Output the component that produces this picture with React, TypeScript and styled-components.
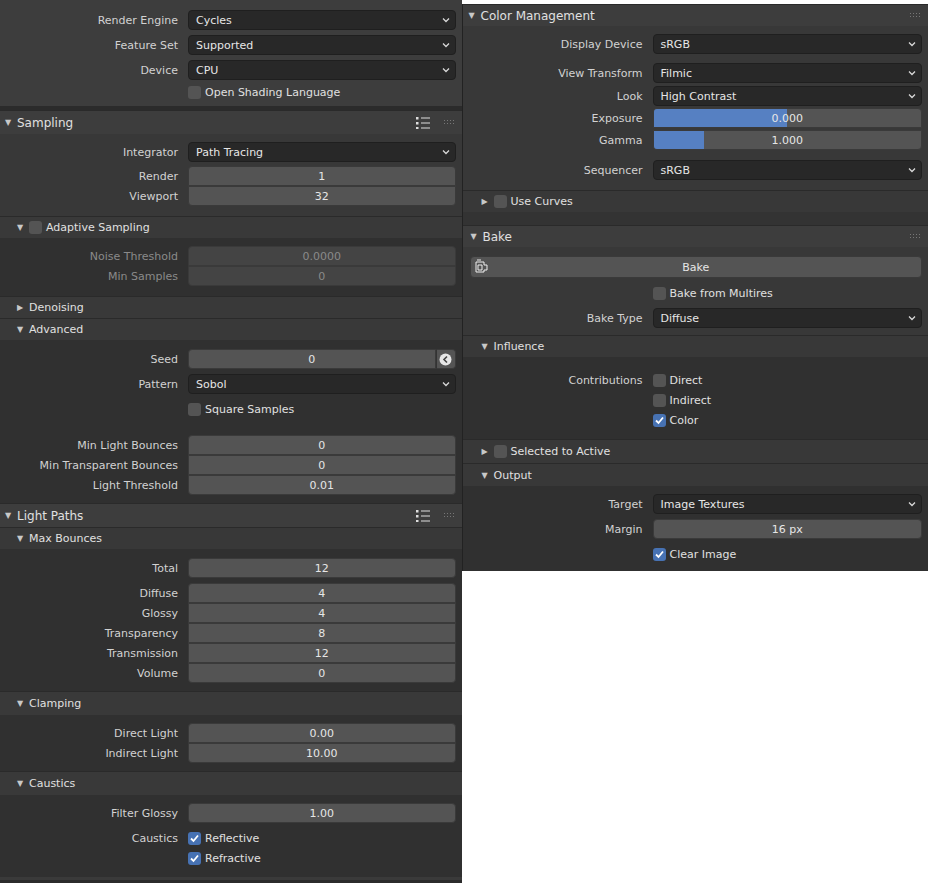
import React from "react";
import styled, { createGlobalStyle } from "styled-components";

const G = createGlobalStyle`
  body { margin: 0; background: #fff; font-family: "DejaVu Sans", sans-serif; font-size: 11px; }
`;

const Page = styled.div`display: flex; align-items: flex-start; width: 928px;`;
const Column = styled.div<{ w: number; mt?: number }>`
  width: ${p => p.w}px; margin-top: ${p => p.mt || 0}px; display: flex; flex-direction: column;
  background: #2b2b2b;
`;
const Section = styled.div<{ bg: string; pt?: number; pb?: number; h?: number }>`
  background: ${p => p.bg}; padding: ${p => p.pt || 0}px 0 ${p => p.pb || 0}px 0;
  display: flex; flex-direction: column; ${p => (p.h ? `height:${p.h}px;box-sizing:border-box;` : "")}
`;
const Header = styled.div<{ h: number; indent: number; bg: string; mt?: number }>`
  height: ${p => p.h}px; background: ${p => p.bg}; margin-top: ${p => p.mt || 0}px;
  display: flex; align-items: center; padding-left: ${p => p.indent}px; color: #e0e0e0;
  font-size: ${p => (p.indent < 10 ? 12 : 11)}px; border-top: 1px solid #2a2a2a; box-sizing: border-box;
`;
const Tri = styled.span`width: 10px; font-size: 8px; color: #c8c8c8; margin-right: 2px;`;
const HeadIcons = styled.div`margin-left: auto; display: flex; align-items: center; gap: 14px; padding-right: 6px;`;
const Row = styled.div<{ lw: number; mt?: number }>`
  display: grid; grid-template-columns: ${p => p.lw}px 1fr; column-gap: 10px; height: 20px;
  margin-top: ${p => p.mt || 0}px; padding-right: 6px; align-items: center;
`;
const Label = styled.div<{ dim?: boolean }>`
  text-align: right; color: ${p => (p.dim ? "#8a8a8a" : "#d2d2d2")}; white-space: nowrap;
`;
const Drop = styled.div`
  height: 20px; background: #282828; border: 1px solid #1f1f1f; border-radius: 4px; box-sizing: border-box;
  display: flex; align-items: center; padding: 0 5px 0 7px; color: #e6e6e6;
`;
const Num = styled.div<{ pos?: "top" | "mid" | "bot" | "one"; dim?: boolean }>`
  position: relative; height: 20px; box-sizing: border-box; background: #545454;
  border: 1px solid #3a3a3a; color: ${p => (p.dim ? "#8a8a8a" : "#e6e6e6")};
  ${p => p.dim && "background:#444;"}
  border-radius: ${p => ({ top: "4px 4px 0 0", mid: "0", bot: "0 0 4px 4px", one: "4px" } as any)[p.pos || "one"]};
  display: flex; align-items: center; justify-content: center; overflow: hidden;
`;
const Fill = styled.div`position: absolute; left: 0; top: 0; bottom: 0; background: #5680c2;`;
const NumText = styled.span`position: relative;`;
const Check = styled.span<{ on?: boolean }>`
  width: 13px; height: 13px; border-radius: 3px; background: ${p => (p.on ? "#4772b3" : "#545454")};
  display: inline-flex; align-items: center; justify-content: center; flex: none;
`;
const CheckLine = styled.div`display: flex; align-items: center; gap: 4px; color: #e0e0e0;`;
const BakeBtn = styled.div`
  height: 20px; margin: 9px 6px 0 7px; background: #545454; border: 1px solid #3a3a3a; border-radius: 4px;
  display: flex; align-items: center; justify-content: center; color: #e6e6e6; position: relative;
`;
const BtnIcon = styled.span`position: absolute; left: 3px; top: 2px;`;
const SeedWrap = styled.div`display: flex;`;
const SeedBtn = styled.div`
  width: 20px; height: 20px; box-sizing: border-box; background: #545454; border: 1px solid #3a3a3a;
  border-left: 1px solid #333; border-radius: 0 4px 4px 0; display: flex; align-items: center; justify-content: center;
`;

const Chevron = () => (
  <svg width="8" height="6" viewBox="0 0 8 6" style={{ marginLeft: "auto" }}>
    <path d="M1 1.5 L4 4.5 L7 1.5" stroke="#d8d8d8" strokeWidth="1.3" fill="none" />
  </svg>
);
const Tick = () => (
  <svg width="11" height="11" viewBox="0 0 11 11">
    <path d="M2 5.5 L4.5 8 L9 2.5" stroke="#fff" strokeWidth="1.8" fill="none" />
  </svg>
);
const ListIcon = () => (
  <svg width="14" height="12" viewBox="0 0 14 12">
    {[1, 6, 11].map(y => (
      <g key={y}>
        <rect x="0" y={y - 1} width="2.5" height="2.5" fill="#ddd" />
        <rect x="5" y={y - 0.5} width="9" height="1" fill="#ddd" />
      </g>
    ))}
  </svg>
);
const Grip = () => (
  <svg width="12" height="6" viewBox="0 0 12 6">
    {[0, 3, 6, 9].map(x => [0, 3].map(y => <rect key={x + "-" + y} x={x} y={y} width="1" height="1" fill="#777" />))}
  </svg>
);

type HP = { title: string; icons?: boolean; list?: boolean };
const MainHeader = ({ title, list }: HP) => (
  <Header h={24} indent={5} bg="#3d3d3d">
    <Tri>▼</Tri>{title}
    <HeadIcons>{list && <ListIcon />}<Grip /></HeadIcons>
  </Header>
);
const Sub = ({ title, closed, check, h = 22, indent = 17, bg = "#393939" }: { title: string; closed?: boolean; check?: boolean; h?: number; indent?: number; bg?: string }) => (
  <Header h={h} indent={indent} bg={bg}>
    <Tri>{closed ? "▶" : "▼"}</Tri>
    {check && <Check style={{ marginRight: 4 }} />}
    {title}
  </Header>
);

const D = ({ l, v, lw, mt }: { l: string; v: string; lw: number; mt?: number }) => (
  <Row lw={lw} mt={mt}><Label>{l}</Label><Drop>{v}<Chevron /></Drop></Row>
);
const N = ({ l, v, lw, mt, pos, dim, fill }: { l: string; v: string; lw: number; mt?: number; pos?: "top" | "mid" | "bot" | "one"; dim?: boolean; fill?: number }) => (
  <Row lw={lw} mt={mt}><Label dim={dim}>{l}</Label>
    <Num pos={pos} dim={dim}>{fill !== undefined && <Fill style={{ width: `${fill}%` }} />}<NumText>{v}</NumText></Num>
  </Row>
);
const C = ({ l, t, lw, mt, on }: { l?: string; t: string; lw: number; mt?: number; on?: boolean }) => (
  <Row lw={lw} mt={mt}><Label>{l}</Label><CheckLine><Check on={on}>{on && <Tick />}</Check>{t}</CheckLine></Row>
);

const L = 178;
const R = 180;

export default function App() {
  return (
    <Page>
      <G />
      <Column w={462}>
        <Section bg="#3d3d3d" pt={10} h={106}>
          <D l="Render Engine" v="Cycles" lw={L} />
          <D l="Feature Set" v="Supported" lw={L} mt={5} />
          <D l="Device" v="CPU" lw={L} mt={5} />
          <C t="Open Shading Language" lw={L} mt={2} />
        </Section>
        <Section bg="#2b2b2b" h={4} />
        <MainHeader title="Sampling" list />
        <Section bg="#383838" pt={8} h={82}>
          <D l="Integrator" v="Path Tracing" lw={L} />
          <N l="Render" v="1" lw={L} mt={4} pos="top" />
          <N l="Viewport" v="32" lw={L} pos="bot" />
        </Section>
        <Sub title="Adaptive Sampling" check />
        <Section bg="#303030" pt={8} h={58}>
          <N l="Noise Threshold" v="0.0000" lw={L} pos="top" dim />
          <N l="Min Samples" v="0" lw={L} pos="bot" dim />
        </Section>
        <Sub title="Denoising" closed />
        <Sub title="Advanced" />
        <Section bg="#303030" pt={9} h={163}>
          <Row lw={L}><Label>Seed</Label>
            <SeedWrap><Num pos="one" style={{ flex: 1, borderRadius: "4px 0 0 4px" }}><NumText>0</NumText></Num>
              <SeedBtn><svg width="13" height="13" viewBox="0 0 13 13"><circle cx="6.5" cy="6.5" r="6" fill="#e6e6e6" /><path d="M8 3.5 L5 6.5 L8 9.5" stroke="#444" strokeWidth="1.6" fill="none" /></svg></SeedBtn>
            </SeedWrap>
          </Row>
          <D l="Pattern" v="Sobol" lw={L} mt={5} />
          <C t="Square Samples" lw={L} mt={5} />
          <N l="Min Light Bounces" v="0" lw={L} mt={16} pos="top" />
          <N l="Min Transparent Bounces" v="0" lw={L} pos="mid" />
          <N l="Light Threshold" v="0.01" lw={L} pos="bot" />
        </Section>
        <MainHeader title="Light Paths" list />
        <Sub title="Max Bounces" bg="#383838" />
        <Section bg="#303030" pt={9} h={142}>
          <N l="Total" v="12" lw={L} />
          <N l="Diffuse" v="4" lw={L} mt={5} pos="top" />
          <N l="Glossy" v="4" lw={L} pos="mid" />
          <N l="Transparency" v="8" lw={L} pos="mid" />
          <N l="Transmission" v="12" lw={L} pos="mid" />
          <N l="Volume" v="0" lw={L} pos="bot" />
        </Section>
        <Sub title="Clamping" h={24} />
        <Section bg="#303030" pt={8} h={56}>
          <N l="Direct Light" v="0.00" lw={L} pos="top" />
          <N l="Indirect Light" v="10.00" lw={L} pos="bot" />
        </Section>
        <Sub title="Caustics" h={24} />
        <Section bg="#303030" pt={8} h={82}>
          <N l="Filter Glossy" v="1.00" lw={L} />
          <C l="Caustics" t="Reflective" lw={L} mt={5} on />
          <C t="Refractive" lw={L} on />
        </Section>
        <Section bg="#3a3a3a" h={3} />
        <Section bg="#2b2b2b" h={3} />
      </Column>
      <Column w={466} mt={4} style={{ borderLeft: "1px solid #222" }}>
        <Header h={22} indent={6} bg="#3d3d3d" style={{ fontSize: 12 }}>
          <Tri>▼</Tri>Color Management<HeadIcons><Grip /></HeadIcons>
        </Header>
        <Section bg="#383838" pt={8} h={164}>
          <D l="Display Device" v="sRGB" lw={R} />
          <D l="View Transform" v="Filmic" lw={R} mt={9} />
          <D l="Look" v="High Contrast" lw={R} mt={3} />
          <N l="Exposure" v="0.000" lw={R} mt={2} pos="top" fill={50} />
          <N l="Gamma" v="1.000" lw={R} mt={2} pos="bot" fill={19} />
          <D l="Sequencer" v="sRGB" lw={R} mt={10} />
        </Section>
        <Sub title="Use Curves" closed check h={22} indent={19} bg="#383838" />
        <Section bg="#333" h={13} />
        <Header h={22} indent={8} bg="#3d3d3d" style={{ fontSize: 12 }}>
          <Tri>▼</Tri>Bake<HeadIcons><Grip /></HeadIcons>
        </Header>
        <Section bg="#383838" h={88}>
          <BakeBtn>
            <BtnIcon><svg width="14" height="14" viewBox="0 0 14 14"><path d="M3 1 h4 M2 3 h8 v3 h3 v5 h-3 v2 h-8 z M4 6 h4 v5 h-4z" stroke="#eee" strokeWidth="1" fill="none" /></svg></BtnIcon>
            Bake
          </BakeBtn>
          <C t="Bake from Multires" lw={R} mt={5} />
          <D l="Bake Type" v="Diffuse" lw={R} mt={5} />
        </Section>
        <Sub title="Influence" indent={19} bg="#383838" />
        <Section bg="#303030" pt={13} h={82}>
          <C l="Contributions" t="Direct" lw={R} />
          <C t="Indirect" lw={R} />
          <C t="Color" lw={R} on />
        </Section>
        <Sub title="Selected to Active" closed check h={24} indent={19} bg="#383838" />
        <Sub title="Output" h={23} indent={19} bg="#383838" />
        <Section bg="#303030" pt={8} h={85}>
          <D l="Target" v="Image Textures" lw={R} />
          <N l="Margin" v="16 px" lw={R} mt={5} />
          <C t="Clear Image" lw={R} mt={5} on />
        </Section>
      </Column>
    </Page>
  );
}
